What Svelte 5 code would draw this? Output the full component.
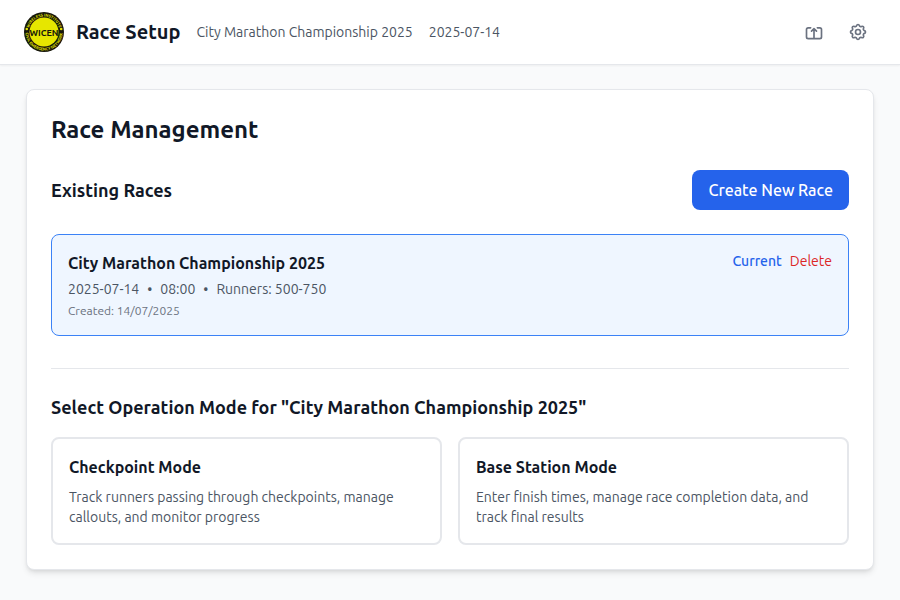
<script>
  const race = {
    name: 'City Marathon Championship 2025',
    date: '2025-07-14',
    time: '08:00',
    runners: '500-750',
    created: '14/07/2025'
  };

  const modes = [
    {
      title: 'Checkpoint Mode',
      text: 'Track runners passing through checkpoints, manage callouts, and monitor progress'
    },
    {
      title: 'Base Station Mode',
      text: 'Enter finish times, manage race completion data, and track final results'
    }
  ];
</script>

<div class="page">
  <header>
    <div class="brand">
      <svg class="logo" viewBox="0 0 40 40" role="img" aria-label="WICEN">
        <defs>
          <path id="ring-top" d="M4.5 20a15.5 15.5 0 0 1 31 0" />
          <path id="ring-bottom" d="M1.4 20a18.6 18.6 0 0 0 37.2 0" />
        </defs>
        <circle cx="20" cy="20" r="20" fill="#17170a" />
        <circle cx="20" cy="20" r="14.5" fill="#e6e600" />
        <text class="ring" text-anchor="middle"><textPath href="#ring-top" startOffset="50%">WIRELESS INSTITUTE</textPath></text>
        <text class="ring" text-anchor="middle"><textPath href="#ring-bottom" startOffset="50%">CIVIL EMERGENCY NETWORK</textPath></text>
        <circle cx="2.8" cy="17" r="1.3" fill="#e6e600" />
        <circle cx="37.2" cy="17" r="1.3" fill="#e6e600" />
        <text class="word" x="20" y="23.5" text-anchor="middle">WICEN</text>
      </svg>
      <h1>Race Setup</h1>
    </div>
    <p class="meta"><span>{race.name}</span><span>{race.date}</span></p>
    <nav aria-label="Tools">
      <button class="icon" aria-label="Export">
        <svg viewBox="0 0 24 24"><path d="M8 7H5a2 2 0 00-2 2v9a2 2 0 002 2h14a2 2 0 002-2V9a2 2 0 00-2-2h-3m-1 4l-3-3m0 0l-3 3m3-3v12" /></svg>
      </button>
      <button class="icon" aria-label="Settings">
        <svg viewBox="0 0 24 24">
          <path d="M10.325 4.317c.426-1.756 2.924-1.756 3.35 0a1.724 1.724 0 002.573 1.066c1.543-.94 3.31.826 2.37 2.37a1.724 1.724 0 001.065 2.572c1.756.426 1.756 2.924 0 3.35a1.724 1.724 0 00-1.066 2.573c.94 1.543-.826 3.31-2.37 2.37a1.724 1.724 0 00-2.572 1.065c-.426 1.756-2.924 1.756-3.35 0a1.724 1.724 0 00-2.573-1.066c-1.543.94-3.31-.826-2.37-2.37a1.724 1.724 0 00-1.065-2.572c-1.756-.426-1.756-2.924 0-3.35a1.724 1.724 0 001.066-2.573c-.94-1.543.826-3.31 2.37-2.37.996.608 2.296.07 2.572-1.065z" />
          <path d="M15 12a3 3 0 11-6 0 3 3 0 016 0z" />
        </svg>
      </button>
    </nav>
  </header>

  <main>
    <section class="panel">
      <h2>Race Management</h2>
      <div class="bar">
        <h3>Existing Races</h3>
        <button class="primary">Create New Race</button>
      </div>

      <article class="race">
        <div class="details">
          <h4>{race.name}</h4>
          <p class="facts">
            <span>{race.date}</span><span>•</span><span>{race.time}</span><span>•</span><span>Runners: {race.runners}</span>
          </p>
          <p class="created">Created: {race.created}</p>
        </div>
        <div class="actions">
          <span class="current">Current</span>
          <button class="delete">Delete</button>
        </div>
      </article>

      <div class="operation">
        <h3>Select Operation Mode for "{race.name}"</h3>
        <div class="modes">
          {#each modes as mode}
            <button class="mode">
              <span class="mode-title">{mode.title}</span>
              <span class="mode-text">{mode.text}</span>
            </button>
          {/each}
        </div>
      </div>
    </section>
  </main>
</div>

<style>
  :global(body) {
    margin: 0;
    background: #f9fafb;
  }

  .page,
  .page * {
    box-sizing: border-box;
  }

  .page {
    min-height: 100vh;
    background: #f9fafb;
    color: #111827;
    font-family: Ubuntu, "Noto Sans", "Open Sans", sans-serif;
    font-size: 16px;
    line-height: 24px;
  }

  h1, h2, h3, h4, p {
    margin: 0;
    font-weight: 600;
  }

  button {
    padding: 0;
    border: 0;
    background: none;
    color: inherit;
    font: inherit;
    cursor: pointer;
  }

  header {
    display: flex;
    align-items: center;
    gap: 16px;
    padding: 12px 24px;
    background: #fff;
    border-bottom: 1px solid #e5e7eb;
    box-shadow: 0 1px 2px rgba(0, 0, 0, 0.05);
  }

  .brand {
    display: flex;
    align-items: center;
    gap: 12px;
  }

  .logo {
    display: block;
    width: 40px;
    height: 40px;
  }

  .ring {
    fill: #e6e600;
    font-size: 4px;
    font-weight: 700;
  }

  .word {
    fill: #17170a;
    font-size: 9px;
    font-weight: 700;
  }

  h1 {
    font-size: 20px;
    line-height: 28px;
  }

  .meta {
    display: flex;
    gap: 16px;
    color: #4b5563;
    font-size: 14px;
    font-weight: 400;
    line-height: 20px;
  }

  nav {
    display: flex;
    gap: 8px;
    margin-left: auto;
  }

  .icon {
    padding: 8px;
    color: #6b7280;
  }

  .icon svg {
    display: block;
    width: 20px;
    height: 20px;
    fill: none;
    stroke: currentColor;
    stroke-width: 2;
    stroke-linecap: round;
    stroke-linejoin: round;
  }

  main {
    max-width: 896px;
    margin: 0 auto;
    padding: 24px;
  }

  .panel {
    padding: 24px;
    background: #fff;
    border: 1px solid #e5e7eb;
    border-radius: 8px;
    box-shadow: 0 4px 6px -1px rgba(0, 0, 0, 0.1), 0 2px 4px -2px rgba(0, 0, 0, 0.1);
  }

  h2 {
    margin-bottom: 24px;
    font-size: 24px;
    line-height: 32px;
  }

  h3 {
    font-size: 18px;
    line-height: 28px;
  }

  .bar {
    display: flex;
    align-items: center;
    justify-content: space-between;
    margin-bottom: 24px;
  }

  .primary {
    padding: 8px 16px;
    background: #2563eb;
    border-radius: 8px;
    color: #fff;
    font-weight: 500;
  }

  .race {
    display: flex;
    align-items: flex-start;
    justify-content: space-between;
    padding: 16px;
    background: #eff6ff;
    border: 1px solid #3b82f6;
    border-radius: 8px;
  }

  .details {
    display: flex;
    flex-direction: column;
    gap: 4px;
  }

  h4 {
    font-size: 16px;
    line-height: 24px;
  }

  .facts {
    display: flex;
    gap: 8px;
    color: #4b5563;
    font-size: 14px;
    font-weight: 400;
    line-height: 20px;
  }

  .created {
    color: #6b7280;
    font-size: 12px;
    font-weight: 400;
    line-height: 16px;
  }

  .actions {
    display: flex;
    gap: 8px;
    font-size: 14px;
    line-height: 20px;
  }

  .current {
    color: #2563eb;
    font-weight: 500;
  }

  .delete {
    color: #dc2626;
  }

  .operation {
    margin-top: 32px;
    padding-top: 24px;
    border-top: 1px solid #e5e7eb;
  }

  .modes {
    display: grid;
    grid-template-columns: repeat(2, 1fr);
    gap: 16px;
    margin-top: 16px;
  }

  .mode {
    display: flex;
    flex-direction: column;
    gap: 8px;
    padding: 16px;
    border: 2px solid #e5e7eb;
    border-radius: 8px;
    text-align: left;
  }

  .mode-title {
    font-weight: 600;
  }

  .mode-text {
    color: #4b5563;
    font-size: 14px;
    line-height: 20px;
  }
</style>
